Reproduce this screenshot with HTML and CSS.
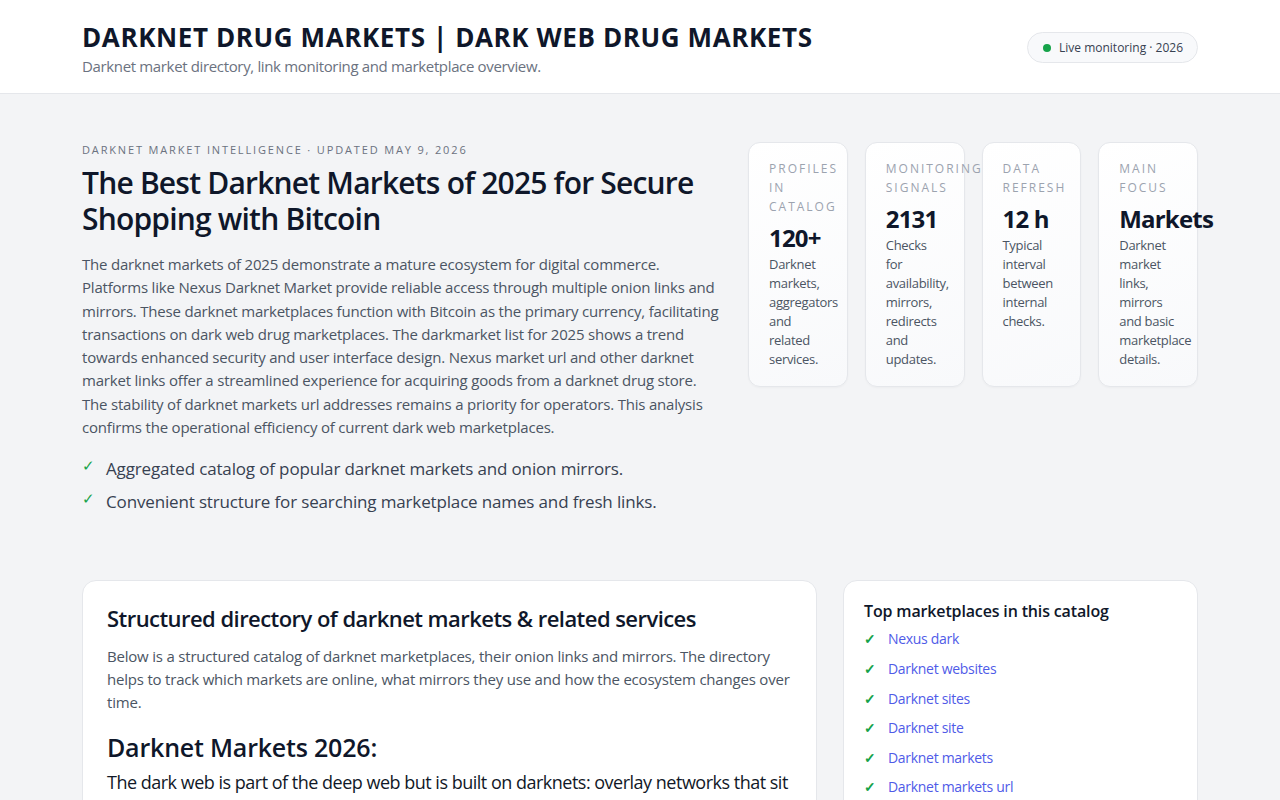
FILE: index.html
```html
<!DOCTYPE html>
<html lang="en">
<head>
<meta charset="utf-8">
<title>Darknet Drug Markets | Dark Web Drug Markets</title>
<link rel="stylesheet" href="styles.css">
</head>
<body>
<header class="site-header">
  <div class="wrap header-row">
    <div class="brand">
      <h1 class="brand-title">DARKNET DRUG MARKETS | DARK WEB DRUG MARKETS</h1>
      <p class="brand-sub">Darknet market directory, link monitoring and marketplace overview.</p>
    </div>
    <div class="status-pill"><span class="dot"></span>Live monitoring · 2026</div>
  </div>
</header>

<main>
  <section class="wrap hero">
    <div class="hero-text">
      <div class="eyebrow">DARKNET MARKET INTELLIGENCE · UPDATED MAY 9, 2026</div>
      <h2 class="hero-title">The Best Darknet Markets of 2025 for Secure Shopping with Bitcoin</h2>
      <p class="hero-lead">The darknet markets of 2025 demonstrate a mature ecosystem for digital commerce. Platforms like Nexus Darknet Market provide reliable access through multiple onion links and mirrors. These darknet marketplaces function with Bitcoin as the primary currency, facilitating transactions on dark web drug marketplaces. The darkmarket list for 2025 shows a trend towards enhanced security and user interface design. Nexus market url and other darknet market links offer a streamlined experience for acquiring goods from a darknet drug store. The stability of darknet markets url addresses remains a priority for operators. This analysis confirms the operational efficiency of current dark web marketplaces.</p>
      <ul class="ticks">
        <li>Aggregated catalog of popular darknet markets and onion mirrors.</li>
        <li>Convenient structure for searching marketplace names and fresh links.</li>
      </ul>
    </div>
    <div class="stats">
      <div class="stat">
        <div class="stat-label">PROFILES IN CATALOG</div>
        <div class="stat-value">120+</div>
        <div class="stat-desc">Darknet markets, aggregators and related services.</div>
      </div>
      <div class="stat">
        <div class="stat-label">MONITORING SIGNALS</div>
        <div class="stat-value">2131</div>
        <div class="stat-desc">Checks for availability, mirrors, redirects and updates.</div>
      </div>
      <div class="stat">
        <div class="stat-label">DATA REFRESH</div>
        <div class="stat-value">12 h</div>
        <div class="stat-desc">Typical interval between internal checks.</div>
      </div>
      <div class="stat">
        <div class="stat-label">MAIN FOCUS</div>
        <div class="stat-value">Markets</div>
        <div class="stat-desc">Darknet market links, mirrors and basic marketplace details.</div>
      </div>
    </div>
  </section>

  <section class="wrap content">
    <article class="card main-card">
      <h3 class="card-title">Structured directory of darknet markets &amp; related services</h3>
      <p class="card-intro">Below is a structured catalog of darknet marketplaces, their onion links and mirrors. The directory helps to track which markets are online, what mirrors they use and how the ecosystem changes over time.</p>
      <h2 class="section-title">Darknet Markets 2026:</h2>
      <p class="body-text">The dark web is part of the deep web but is built on darknets: overlay networks that sit on top of the internet and require special software to access.</p>
    </article>
    <aside class="card side-card">
      <h4 class="side-title">Top marketplaces in this catalog</h4>
      <ul class="side-list">
        <li><a href="#">Nexus dark</a></li>
        <li><a href="#">Darknet websites</a></li>
        <li><a href="#">Darknet sites</a></li>
        <li><a href="#">Darknet site</a></li>
        <li><a href="#">Darknet markets</a></li>
        <li><a href="#">Darknet markets url</a></li>
        <li><a href="#">Dark web markets</a></li>
      </ul>
    </aside>
  </section>
</main>
</body>
</html>
```

FILE: styles.css
```css
* { box-sizing: border-box; }

html, body {
  margin: 0;
  padding: 0;
}

body {
  font-family: "Open Sans", "Noto Sans", Arial, sans-serif;
  background: #f3f4f6;
  color: #111827;
}

.wrap {
  width: 1116px;
  margin: 0 auto;
}

/* Header */
.site-header {
  background: #ffffff;
  border-bottom: 1px solid #e5e7eb;
}

.header-row {
  display: flex;
  justify-content: space-between;
  align-items: center;
  padding: 20px 0 17px;
}

.brand-title {
  margin: 0;
  font-size: 26px;
  line-height: 34px;
  font-weight: 700;
  letter-spacing: 0.6px;
  color: #0f172a;
}

.brand-sub {
  margin: 2px 0 0;
  font-size: 15px;
  line-height: 20px;
  letter-spacing: -0.35px;
  color: #6b7280;
}

.status-pill {
  display: flex;
  align-items: center;
  gap: 8px;
  height: 31px;
  padding: 0 14px 0 15px;
  border: 1px solid #e5e7eb;
  border-radius: 999px;
  background: #f8f9fb;
  font-size: 12px;
  color: #374151;
  margin-top: -1px;
}

.dot {
  width: 8px;
  height: 8px;
  border-radius: 50%;
  background: #16a34a;
}

/* Hero */
.hero {
  display: grid;
  grid-template-columns: 638px 1fr;
  gap: 28px;
  padding-top: 49px;
}

.eyebrow {
  font-size: 11px;
  letter-spacing: 1.85px;
  color: #6b7280;
  line-height: 14px;
}

.hero-title {
  margin: 8px 0 16px;
  font-size: 30px;
  line-height: 36px;
  font-weight: 600;
  letter-spacing: -0.8px;
  color: #0f172a;
}

.hero-lead {
  margin: 0 0 13px;
  font-size: 15px;
  line-height: 23.3px;
  letter-spacing: -0.2px;
  color: #4b5563;
}

.ticks {
  list-style: none;
  margin: 0;
  padding: 0;
}

.ticks li {
  position: relative;
  padding-left: 24px;
  font-size: 17px;
  line-height: 33px;
  letter-spacing: -0.15px;
  color: #374151;
}

.ticks li::before {
  content: "✓";
  position: absolute;
  left: 0;
  top: -3px;
  color: #16a34a;
  font-size: 15px;
}

.stats {
  display: grid;
  grid-template-columns: repeat(4, 1fr);
  gap: 17px;
  align-self: start;
  margin-top: -1px;
}

.stat {
  background: linear-gradient(160deg, #ffffff, #f8f9fb);
  border: 1px solid #e5e7eb;
  border-radius: 12px;
  padding: 16px 0 17px 20px;
  min-width: 0;
  box-shadow: 0 1px 2px rgba(15, 23, 42, 0.03);
}

.stat-label {
  font-size: 12px;
  line-height: 19px;
  letter-spacing: 2px;
  color: #9ca3af;
}

.stat-value {
  margin: 8px 0 3px;
  font-size: 24px;
  line-height: 28px;
  font-weight: 700;
  letter-spacing: -0.8px;
  color: #0f172a;
  white-space: nowrap;
}

.stat-desc {
  font-size: 13px;
  line-height: 19px;
  letter-spacing: -0.3px;
  color: #4b5563;
  padding-right: 18px;
}

/* Content */
.content {
  display: grid;
  grid-template-columns: 735px 1fr;
  gap: 26px;
  margin-top: 62px;
  align-items: start;
}

.card {
  background: #ffffff;
  border: 1px solid #e5e7eb;
  border-radius: 14px;
}

.main-card {
  padding: 22px 24px;
}

.card-title {
  margin: 0 0 12px;
  font-size: 22px;
  line-height: 30px;
  font-weight: 600;
  letter-spacing: -0.55px;
  color: #0f172a;
}

.card-intro {
  margin: 0 0 16px;
  font-size: 15px;
  line-height: 23px;
  letter-spacing: -0.2px;
  color: #4b5563;
}

.section-title {
  margin: 0 0 4px;
  font-size: 25px;
  line-height: 34px;
  font-weight: 600;
  letter-spacing: -0.2px;
  color: #0f172a;
}

.body-text {
  margin: 0;
  font-size: 18px;
  line-height: 28px;
  letter-spacing: -0.5px;
  color: #111827;
}

.side-card {
  padding: 18px 20px;
}

.side-title {
  margin: 0 0 1px;
  font-size: 16px;
  line-height: 24px;
  font-weight: 600;
  letter-spacing: -0.15px;
  color: #0f172a;
}

.side-list {
  list-style: none;
  margin: 0;
  padding: 0;
}

.side-list li {
  display: flex;
  gap: 12px;
  font-size: 14px;
  line-height: 29.6px;
}

.side-list li::before {
  content: "✓";
  color: #16a34a;
  font-weight: 700;
}

.side-list a {
  color: #4f5be8;
  letter-spacing: -0.3px;
  text-decoration: none;
}
```
